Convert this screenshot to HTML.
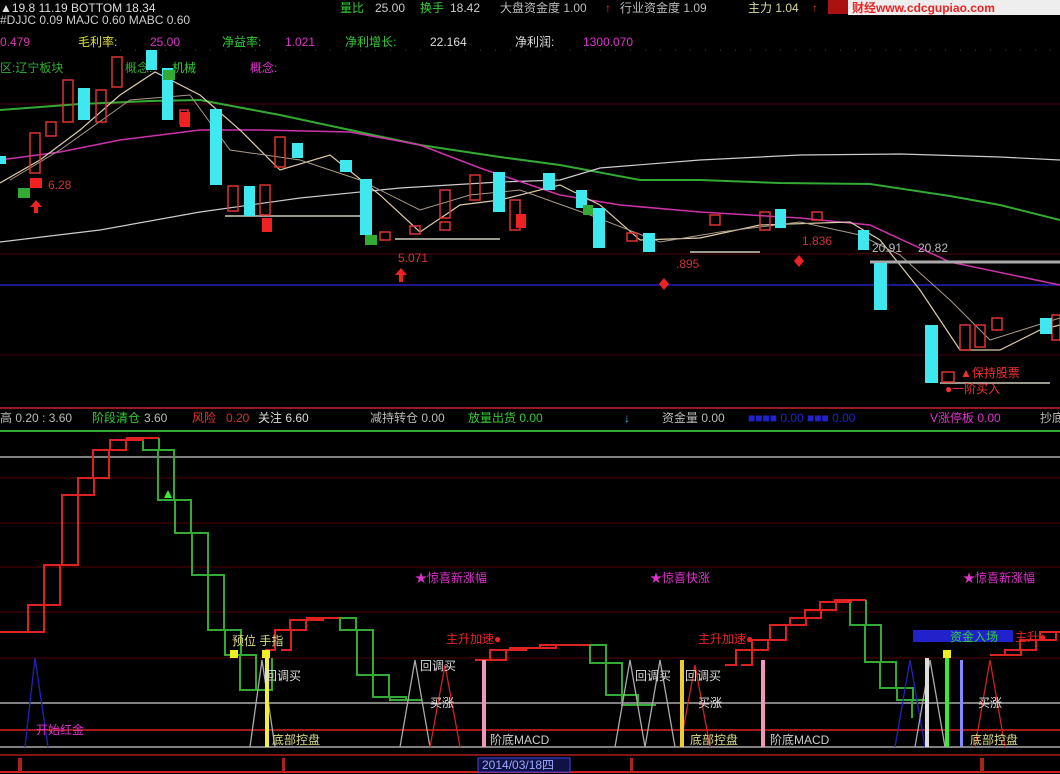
<!DOCTYPE html>
<html><head><meta charset="utf-8"><style>
html,body{margin:0;padding:0;background:#000;}
body{width:1060px;height:774px;overflow:hidden;position:relative;font-family:"Liberation Sans","Noto Sans CJK SC",sans-serif;}
svg{position:absolute;left:0;top:0}
text{font-family:"Liberation Sans","Noto Sans CJK SC",sans-serif;font-size:12px}
</style></head><body>
<svg width="1060" height="774" viewBox="0 0 1060 774">
<rect width="1060" height="774" fill="#000"/>
<text x="0" y="12" fill="#ddd">▲19.8 11.19 BOTTOM 18.34</text>
<text x="340" y="12" fill="#3c3">量比</text><text x="375" y="12" fill="#ccc">25.00</text>
<text x="420" y="12" fill="#3c3">换手</text><text x="450" y="12" fill="#ccc">18.42</text>
<text x="500" y="12" fill="#bbb">大盘资金度 1.00</text><text x="605" y="12" fill="#e33">↑</text>
<text x="620" y="12" fill="#bbb">行业资金度 1.09</text>
<text x="748" y="12" fill="#dd9">主力 1.04</text><text x="812" y="12" fill="#e33">↑</text>
<rect x="828" y="0" width="20" height="14" fill="#a11"/>
<rect x="848" y="0" width="212" height="15" fill="#eee"/>
<text x="852" y="12" fill="#e22" font-weight="bold" font-size="13">财经www.cdcgupiao.com</text>
<text x="0" y="24" fill="#ccc">#DJJC 0.09 MAJC 0.60 MABC 0.60</text>
<text x="0" y="46" fill="#d3a">0.479</text>
<text x="78" y="46" fill="#dd4">毛利率:</text>
<text x="150" y="46" fill="#d3c">25.00</text>
<text x="222" y="46" fill="#3c3">净益率:</text>
<text x="285" y="46" fill="#d3c">1.021</text>
<text x="345" y="46" fill="#3c3">净利增长:</text>
<text x="430" y="46" fill="#ddd">22.164</text>
<text x="515" y="46" fill="#ddd">净利润:</text>
<text x="583" y="46" fill="#d3c">1300.070</text>
<line x1="120" x2="1060" y1="50" y2="50" stroke="#633" stroke-dasharray="1 14"/>
<text x="0" y="72" fill="#3a3">区:辽宁板块</text>
<text x="125" y="72" fill="#3a3">概念:</text><text x="172" y="72" fill="#3c3">机械</text>
<text x="250" y="72" fill="#d3c">概念:</text>
<line x1="0" x2="1060" y1="104" y2="104" stroke="#501" />
<line x1="0" x2="1060" y1="254" y2="254" stroke="#501"/>
<line x1="0" x2="1060" y1="355" y2="355" stroke="#401"/>
<line x1="0" x2="1060" y1="285" y2="285" stroke="#22b" stroke-width="1.5"/>
<polyline fill="none" stroke="#3a3" stroke-width="2" points="0,110 80,104 150,101 200,100 280,115 350,130 420,145 500,157 560,165 640,180 700,180 780,183 870,184 950,196 1000,205 1060,220"/>
<polyline fill="none" stroke="#ccc" stroke-width="1.2" points="0,242 100,230 200,212 300,198 400,188 500,182 560,180 600,168 700,160 800,155 900,154 1000,157 1060,160"/>
<polyline fill="none" stroke="#c3a" stroke-width="1.5" points="0,160 60,152 120,140 200,130 260,130 350,132 420,145 480,168 560,195 620,205 700,212 800,218 870,225 950,262 1060,285"/>
<polyline fill="none" stroke="#dca" stroke-width="1.2" points="0,183 40,160 80,130 120,95 155,72 200,95 240,130 280,170 330,155 380,195 420,232 460,205 500,200 560,185 600,205 640,240 700,238 760,225 850,222 880,240 920,290 960,350 1000,350 1040,330 1060,325"/>
<polyline fill="none" stroke="#a98" stroke-width="1" points="10,180 60,150 130,100 190,95 230,150 300,160 360,180 420,210 470,195 520,190 590,215 660,242 720,232 800,222 860,235 900,255 950,300 990,340 1060,318"/>
<line x1="225" x2="365" y1="216" y2="216" stroke="#ccb" stroke-width="1.5"/>
<line x1="395" x2="500" y1="239" y2="239" stroke="#ccb" stroke-width="1.5"/>
<line x1="690" x2="760" y1="252" y2="252" stroke="#ccb" stroke-width="1.5"/>
<line x1="870" x2="1060" y1="262" y2="262" stroke="#aaa" stroke-width="3"/>
<line x1="940" x2="1050" y1="383" y2="383" stroke="#ccb" stroke-width="1.5"/>
<g fill="none" stroke="#d33" stroke-width="1.5">
<rect x="30" y="133" width="10" height="40"/><rect x="46" y="122" width="10" height="14"/>
<rect x="63" y="80" width="10" height="42"/><rect x="96" y="90" width="10" height="32"/>
<rect x="112" y="57" width="10" height="30"/><rect x="180" y="110" width="8" height="14"/>
<rect x="275" y="137" width="10" height="30"/><rect x="260" y="185" width="10" height="30"/>
<rect x="228" y="186" width="10" height="25"/><rect x="380" y="232" width="10" height="8"/>
<rect x="410" y="226" width="10" height="8"/><rect x="440" y="222" width="10" height="8"/>
<rect x="470" y="175" width="10" height="25"/><rect x="510" y="200" width="10" height="30"/>
<rect x="627" y="233" width="10" height="8"/><rect x="710" y="215" width="10" height="10"/>
<rect x="760" y="212" width="10" height="18"/><rect x="812" y="212" width="10" height="8"/>
<rect x="960" y="325" width="10" height="25"/><rect x="975" y="325" width="10" height="22"/>
<rect x="992" y="318" width="10" height="12"/><rect x="1052" y="315" width="8" height="25"/>
<rect x="942" y="372" width="12" height="10"/><rect x="440" y="190" width="10" height="28"/>
</g>
<g fill="#3ee8ee">
<rect x="78" y="88" width="12" height="32"/><rect x="146" y="50" width="11" height="20"/>
<rect x="162" y="68" width="11" height="52"/><rect x="210" y="109" width="12" height="76"/>
<rect x="244" y="186" width="11" height="30"/><rect x="292" y="143" width="11" height="15"/>
<rect x="340" y="160" width="12" height="12"/><rect x="360" y="179" width="12" height="56"/>
<rect x="493" y="172" width="12" height="40"/><rect x="543" y="173" width="12" height="17"/>
<rect x="576" y="190" width="11" height="18"/><rect x="593" y="208" width="12" height="40"/>
<rect x="643" y="233" width="12" height="19"/><rect x="775" y="209" width="11" height="19"/>
<rect x="858" y="230" width="11" height="20"/><rect x="874" y="263" width="13" height="47"/>
<rect x="925" y="325" width="13" height="58"/><rect x="1040" y="318" width="12" height="16"/>
<rect x="0" y="156" width="6" height="8"/>
</g>
<g fill="#e22">
<rect x="30" y="178" width="12" height="10"/><rect x="180" y="112" width="10" height="15"/>
<rect x="262" y="218" width="10" height="14"/><rect x="516" y="214" width="10" height="14"/>
<polygon points="36,200 42,207 38,207 38,213 34,213 34,207 30,207"/>
<polygon points="401,268 407,275 403,275 403,282 399,282 399,275 395,275"/>
<polygon points="664,278 669,284 664,290 659,284"/>
<polygon points="799,255 804,261 799,267 794,261"/>
</g>
<g fill="#3a3"><rect x="18" y="188" width="12" height="10"/><rect x="365" y="235" width="12" height="10"/><rect x="583" y="205" width="10" height="10"/><rect x="163" y="70" width="12" height="10"/></g>
<text x="48" y="189" fill="#c33" font-size="11">6.28</text>
<text x="398" y="262" fill="#d33" font-size="11">5.071</text>
<text x="676" y="268" fill="#c33" font-size="11">.895</text>
<text x="802" y="245" fill="#c33" font-size="11">1.836</text>
<text x="872" y="252" fill="#bbb" font-size="11">20.91</text><text x="918" y="252" fill="#bbb" font-size="11">20.82</text>
<text x="960" y="377" fill="#e33" font-size="11">▲保持股票</text>
<text x="945" y="393" fill="#e33" font-size="11">●一阶买入</text>
<line x1="0" x2="1060" y1="408" y2="408" stroke="#c22" stroke-width="1.5"/>
<text x="0" y="422" fill="#bbb">高 0.20 : 3.60</text>
<text x="92" y="422" fill="#3c3">阶段清仓</text><text x="144" y="422" fill="#bbb">3.60</text>
<text x="192" y="422" fill="#e33">风险</text><text x="226" y="422" fill="#c33">0.20</text>
<text x="258" y="422" fill="#ddd">关注 6.60</text>
<text x="370" y="422" fill="#bbb">减持转仓 0.00</text>
<text x="468" y="422" fill="#3c3">放量出货 0.00</text>
<text x="624" y="422" fill="#4bd">↓</text>
<text x="662" y="422" fill="#bbb">资金量 0.00</text>
<text x="748" y="422" fill="#22c">■■■■ 0.00 ■■■ 0.00</text>
<text x="930" y="422" fill="#d3c">V涨停板 0.00</text>
<text x="1040" y="422" fill="#bbb">抄底</text>
<line x1="0" x2="1060" y1="431" y2="431" stroke="#3a3" stroke-width="2"/>
<line x1="0" x2="1060" y1="457" y2="457" stroke="#ccc" stroke-width="1.3"/>
<g stroke="#500" stroke-width="1"><line x1="0" x2="1060" y1="478" y2="478"/><line x1="0" x2="1060" y1="523" y2="523"/><line x1="0" x2="1060" y1="567" y2="567"/><line x1="0" x2="1060" y1="612" y2="612"/><line x1="0" x2="1060" y1="658" y2="658"/></g>
<line x1="0" x2="1060" y1="703" y2="703" stroke="#ccc" stroke-width="1.3"/>
<line x1="0" x2="1060" y1="730" y2="730" stroke="#d22" stroke-width="1.5"/>
<line x1="0" x2="1060" y1="747" y2="747" stroke="#ccc" stroke-width="1.3"/>
<line x1="0" x2="1060" y1="755" y2="755" stroke="#c22" stroke-width="1.3"/>
<line x1="0" x2="1060" y1="772" y2="772" stroke="#c22" stroke-width="2"/>
<g id="steps">
<polyline fill="none" stroke="#d22" stroke-width="2" points="0,632 28,632 28,605 44,605 44,565 62,565 62,495 78,495 78,478 93,478 93,450 110,450 110,440 127,440 127,438 143,438"/>
<polyline fill="none" stroke="#3a3" stroke-width="2" points="143,438 143,450 158,450 158,500 175,500 175,533 192,533 192,575 208,575 208,630 225,630 225,655 240,655 240,690 256,690 256,658"/>
<polyline fill="none" stroke="#d22" stroke-width="2" points="265,650 275,650 275,630 290,630 290,620 307,620 307,618 323,618"/>
<polyline fill="none" stroke="#3a3" stroke-width="2" points="323,618 340,618 340,630 357,630 357,675 373,675 373,697 390,697 390,700 406,700"/>
<polyline fill="none" stroke="#d22" stroke-width="2" points="475,660 490,660 490,650 510,650 510,648 540,648 540,645 573,645"/>
<polyline fill="none" stroke="#3a3" stroke-width="2" points="575,645 590,645 590,663 606,663 606,695 622,695 622,705 640,705"/>
<polyline fill="none" stroke="#d22" stroke-width="2" points="725,665 736,665 736,650 752,650 752,640 770,640 770,625 790,625 790,618 805,618 805,610 820,610 820,602 835,602 835,600 850,600"/>
<polyline fill="none" stroke="#3a3" stroke-width="2" points="850,600 850,625 865,625 865,662 880,662 880,688 897,688 897,700 912,700 912,718"/>
<polyline fill="none" stroke="#d22" stroke-width="2" points="990,655 1005,655 1005,650 1020,650 1020,640 1040,640 1040,632 1060,632"/>
</g>
<use href="#steps" transform="translate(16,0)"/>
<g fill="none" stroke-width="1.3">
<polyline stroke="#22b" points="25,747 35,658 48,747"/>
<polyline stroke="#aaa" points="250,747 262,660 275,747"/>
<polyline stroke="#aaa" points="400,747 415,660 430,747"/>
<polyline stroke="#c22" points="430,747 445,665 460,747"/>
<polyline stroke="#aaa" points="615,747 630,660 645,747"/>
<polyline stroke="#aaa" points="645,747 660,660 675,747"/>
<polyline stroke="#c22" points="680,747 695,665 710,747"/>
<polyline stroke="#22b" points="895,747 910,660 925,747"/>
<polyline stroke="#aaa" points="915,747 930,660 945,747"/>
<polyline stroke="#c22" points="975,747 990,660 1005,747"/>
</g>
<rect x="265" y="652" width="4" height="95" fill="#ee4"/>
<rect x="680" y="660" width="4" height="87" fill="#ec3"/>
<rect x="482" y="660" width="4" height="87" fill="#e9b"/>
<rect x="761" y="660" width="4" height="87" fill="#e9b"/>
<rect x="945" y="655" width="4" height="92" fill="#3e3"/>
<rect x="925" y="658" width="4" height="89" fill="#ddd"/>
<rect x="960" y="660" width="3" height="87" fill="#88f"/>
<rect x="230" y="650" width="8" height="8" fill="#ee2"/><rect x="262" y="650" width="8" height="8" fill="#ee2"/><rect x="943" y="650" width="8" height="8" fill="#ee2"/>
<polygon points="168,490 172,498 164,498" fill="#3e3"/>
<text x="415" y="582" fill="#d3c">★惊喜新涨幅</text>
<text x="650" y="582" fill="#d3c">★惊喜快涨</text>
<text x="963" y="582" fill="#d3c">★惊喜新涨幅</text>
<text x="232" y="645" fill="#dd8">预位 手指</text>
<text x="265" y="680" fill="#ddd">回调买</text>
<text x="420" y="670" fill="#ddd">回调买</text>
<text x="430" y="707" fill="#ddd">买涨</text>
<text x="446" y="643" fill="#e22">主升加速●</text>
<text x="635" y="680" fill="#ddd">回调买</text><text x="685" y="680" fill="#ddd">回调买</text>
<text x="698" y="707" fill="#ddd">买涨</text>
<text x="698" y="643" fill="#e22">主升加速●</text>
<text x="36" y="734" fill="#d3c" font-size="11">开始红金</text>
<text x="272" y="744" fill="#dd8">底部控盘</text>
<text x="490" y="744" fill="#ccc">阶底MACD</text>
<text x="690" y="744" fill="#dd8">底部控盘</text>
<text x="770" y="744" fill="#ccc">阶底MACD</text>
<text x="970" y="744" fill="#dd8">底部控盘</text>
<text x="978" y="707" fill="#ddd">买涨</text>
<rect x="913" y="630" width="100" height="12" fill="#22c"/>
<text x="950" y="641" fill="#3c3" font-size="11">资金入场</text>
<text x="1015" y="641" fill="#e22" font-size="11">主升●</text>
<rect x="478" y="758" width="92" height="14" fill="#114" stroke="#44e"/>
<text x="482" y="769" fill="#9af" font-size="11">2014/03/18四</text>
<rect x="18" y="758" width="4" height="14" fill="#a22"/><rect x="282" y="758" width="3" height="14" fill="#a22"/><rect x="630" y="758" width="3" height="14" fill="#a22"/><rect x="980" y="758" width="4" height="14" fill="#a22"/>
</svg>
</body></html>
